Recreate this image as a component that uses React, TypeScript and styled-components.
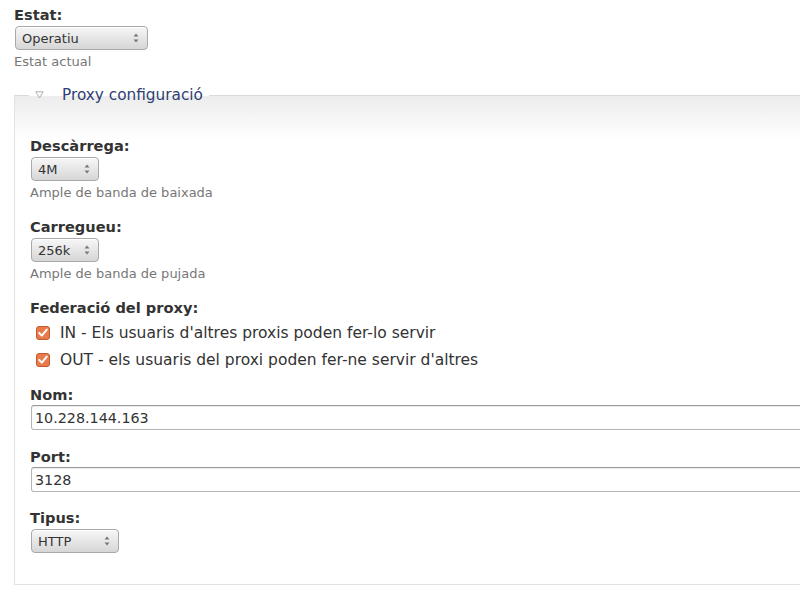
import React from "react";
import styled, { createGlobalStyle } from "styled-components";

const Global = createGlobalStyle`
  html, body { margin: 0; padding: 0; background: #fff; overflow: hidden; }
  body { font-family: "DejaVu Sans", Verdana, sans-serif; color: #333; }
`;

const Page = styled.div`
  padding: 6px 0 0 14px;
  width: 1000px;
`;

const Item = styled.div<{ $gap?: number }>`
  margin-bottom: ${(p) => p.$gap ?? 17}px;
`;

const Label = styled.div`
  font-weight: bold;
  font-size: 14.6px;
  line-height: 18px;
  color: #333;
  margin-bottom: 2px;
`;

const Description = styled.div`
  font-size: 13px;
  line-height: 16px;
  color: #777;
  margin-top: 4px;
`;

const SelectBox = styled.div<{ $width: number }>`
  box-sizing: border-box;
  width: ${(p) => p.$width}px;
  height: 24px;
  margin-left: 1px;
  border: 1px solid #a9a9a9;
  border-radius: 4px;
  background: linear-gradient(#f7f7f7, #d6d6d6);
  box-shadow: inset 0 1px 0 #fff;
  display: flex;
  align-items: center;
  justify-content: space-between;
  padding: 0 8px 0 6px;
  font-size: 13px;
  color: #333;
`;

const Arrows = () => (
  <svg width="6" height="12" viewBox="0 0 6 12">
    <path d="M0.5 4.5 L3 1.5 L5.5 4.5 Z" fill="#777" />
    <path d="M0.5 7.5 L3 10.5 L5.5 7.5 Z" fill="#777" />
  </svg>
);

const Select = ({ value, width }: { value: string; width: number }) => (
  <SelectBox $width={width}>
    <span>{value}</span>
    <Arrows />
  </SelectBox>
);

const Fieldset = styled.fieldset`
  margin: 16px 0 0 0;
  padding: 33px 15px 31px 15px;
  border: 1px solid #e2e2e2;
  border-top-color: #dadada;
  background: linear-gradient(#ececec 0, #f6f6f6 22px, #fff 44px);
`;

const Legend = styled.legend`
  padding: 0 6px;
  margin-left: -1px;
  display: flex;
  align-items: center;
  font-size: 15.3px;
  line-height: 18px;
  color: #2f3e74;
`;

const LegendText = styled.span`
  margin-left: 18px;
`;

const Triangle = () => (
  <svg width="9" height="8" viewBox="0 0 9 8">
    <path d="M0.8 0.8 L8.2 0.8 L4.5 7 Z" fill="none" stroke="#b0b0b0" strokeWidth="1" />
  </svg>
);

const CheckList = styled.div`
  display: flex;
  flex-direction: column;
  gap: 5px;
  padding-top: 3px;
`;

const CheckRow = styled.div`
  display: flex;
  align-items: center;
  height: 22px;
  padding-left: 6px;
  font-size: 15.5px;
  color: #333;
`;

const CheckText = styled.span`
  margin-left: 10px;
`;

const CheckIcon = () => (
  <svg width="14" height="14" viewBox="0 0 14 14">
    <rect x="0.5" y="0.5" width="13" height="13" rx="2.5" fill="#e87a4b" stroke="#c25a2c" />
    <path d="M3.2 7 L5.8 9.6 L10.8 3.6" fill="none" stroke="#fff" strokeWidth="2" strokeLinecap="round" strokeLinejoin="round" />
  </svg>
);

const TextInput = styled.div`
  box-sizing: border-box;
  height: 25px;
  margin-top: -1px;
  margin-left: 1px;
  border: 1px solid #b4b4b4;
  border-top-color: #999;
  border-radius: 3px;
  box-shadow: inset 0 1px 1px rgba(0, 0, 0, 0.08);
  background: #fff;
  display: flex;
  align-items: center;
  padding-left: 3px;
  font-size: 14.3px;
  color: #333;
`;

export default function App() {
  return (
    <>
      <Global />
      <Page>
        <Item $gap={0}>
          <Label>Estat:</Label>
          <Select value="Operatiu" width={133} />
          <Description>Estat actual</Description>
        </Item>
        <Fieldset>
          <Legend>
            <Triangle />
            <LegendText>Proxy configuració</LegendText>
          </Legend>
          <Item>
            <Label>Descàrrega:</Label>
            <Select value="4M" width={68} />
            <Description>Ample de banda de baixada</Description>
          </Item>
          <Item>
            <Label>Carregueu:</Label>
            <Select value="256k" width={68} />
            <Description>Ample de banda de pujada</Description>
          </Item>
          <Item $gap={15}>
            <Label>Federació del proxy:</Label>
            <CheckList>
              <CheckRow>
                <CheckIcon />
                <CheckText>IN - Els usuaris d'altres proxis poden fer-lo servir</CheckText>
              </CheckRow>
              <CheckRow>
                <CheckIcon />
                <CheckText>OUT - els usuaris del proxi poden fer-ne servir d'altres</CheckText>
              </CheckRow>
            </CheckList>
          </Item>
          <Item $gap={18}>
            <Label>Nom:</Label>
            <TextInput>10.228.144.163</TextInput>
          </Item>
          <Item>
            <Label>Port:</Label>
            <TextInput>3128</TextInput>
          </Item>
          <Item $gap={0}>
            <Label>Tipus:</Label>
            <Select value="HTTP" width={88} />
          </Item>
        </Fieldset>
      </Page>
    </>
  );
}
